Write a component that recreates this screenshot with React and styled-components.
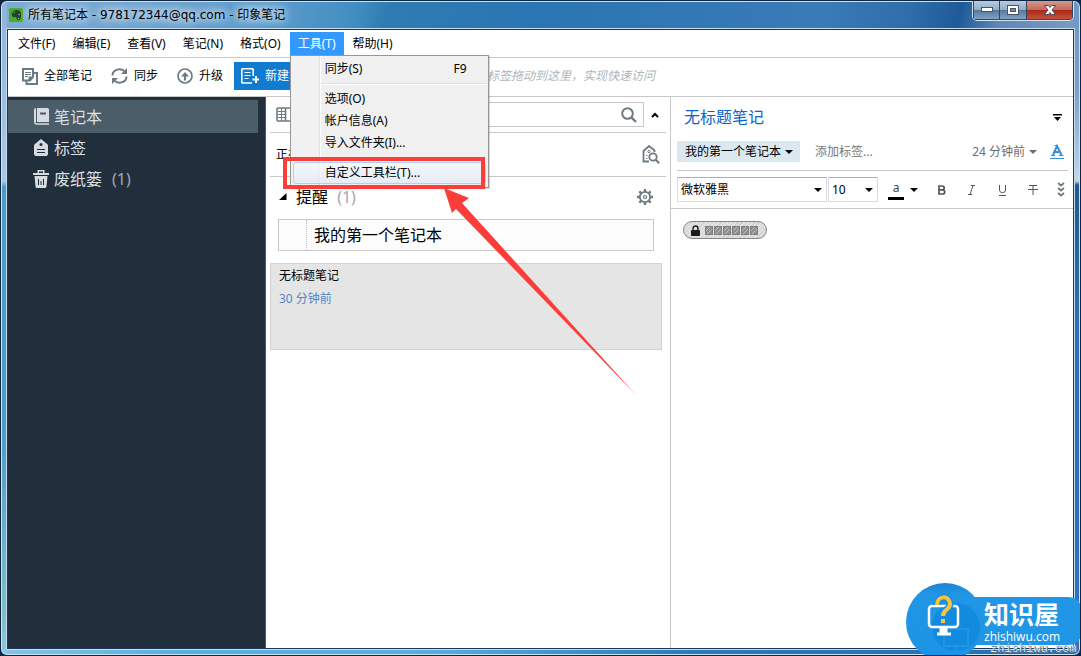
import React from 'react';
import styled, { createGlobalStyle } from 'styled-components';

const GlobalStyle = createGlobalStyle`
    * {
        box-sizing: border-box;
    }
    html, body {
        margin: 0;
        background: #0d2444;
    }
    body, button, input, select {
        font-family: "Noto Sans", "Noto Sans CJK SC", sans-serif;
        font-size: 12px;
        line-height: 18px;
        color: #000;
    }
    button {
        border: 0;
        padding: 0;
        background: none;
        white-space: nowrap;
    }
    h1, h2, h3, p {
        margin: 0;
        font-weight: 400;
    }
    svg {
        display: block;
        flex: none;
    }
`;

/* ---------- window frame ---------- */

const Window = styled.div`
    position: relative;
    display: flex;
    flex-direction: column;
    min-height: 100vh;
    padding: 0 4px 4px;
    border: 1px solid #10263f;
    border-radius: 7px;
    overflow: hidden;
    box-shadow: inset 0 0 0 1px #c9e2f4;
    background:
        linear-gradient(#8fb4d9 0, #a9c9e6 180px, #4d9ac9 186px, #4d9ac9 420px, #7fc0c8 620px, #8cc6ec) left / 6px 100% no-repeat,
        linear-gradient(#6f97c4 0, #7c9fca 90px, #c3d5ea 180px, #1f5896 184px, #2b70b6 320px, #2d74bb) right / 6px 100% no-repeat,
        linear-gradient(90deg, #85c3ea, #5aaedc 180px, #5aaedc 420px, #2a78ba 700px, #2a6db2) bottom / 100% 7px no-repeat,
        linear-gradient(105deg, #7fabd3 0, #5d9bcb 260px, #4791c4 330px, #3f8cc0 350px, #2f7cb2 375px, #2a75b3 520px, #3a7ab7 800px, #2f6dab 880px, #1f5a98 930px, #6088b6 970px, #7a99c2 1040px);
`;

const TitleBar = styled.header`
    display: flex;
    align-items: flex-start;
    gap: 5px;
    height: 27px;
    padding: 0 2px 0 4px;
`;

const AppLogo = styled.svg`
    margin-top: 7px;
`;

const WindowTitle = styled.h1`
    flex: 1;
    margin-top: 4px;
    font-family: "DejaVu Sans", "Noto Sans CJK SC", sans-serif;
    font-size: 12px;
    line-height: 20px;
    text-shadow: 0 0 6px #dcecf8, 0 0 10px #dcecf8, 0 0 12px #cfe4f4;
`;

const WindowButtons = styled.div`
    display: flex;
    height: 20px;
    border: 1px solid #d5e3f0;
    border-top: 0;
    border-radius: 0 0 5px 5px;
    overflow: hidden;
`;

const WindowButton = styled.button`
    display: flex;
    align-items: center;
    justify-content: center;
    width: ${({ $close }) => ($close ? '46px' : '27px')};
    border: 1px solid #33475f;
    border-top: 0;
    border-left-width: ${({ $first }) => ($first ? '1px' : '0')};
    background: ${({ $close }) =>
        $close
            ? 'linear-gradient(#d59a90, #c4695b 48%, #a92b18 52%, #c5523a)'
            : 'linear-gradient(#b9cbdd, #93aec9 48%, #56789d 52%, #7fa3c4)'};
`;

const Client = styled.div`
    flex: 1;
    display: flex;
    flex-direction: column;
    border: 1px solid #1c3a57;
    outline: 1px solid #c4dcef;
    margin: 1px 2px 2px;
    background: #fff;
`;

/* ---------- menu bar and drop-down ---------- */

const MenuBar = styled.nav`
    display: flex;
    align-items: center;
    gap: 1px;
    height: 28px;
    padding-left: 2px;
    border-bottom: 1px solid #c8c8c8;
`;

const MenuEntry = styled.div`
    position: relative;
`;

const MenuButton = styled.button`
    height: 23px;
    padding: 0 8px;
    color: ${({ $open }) => ($open ? '#fff' : '#000')};
    background: ${({ $open }) => ($open ? '#3399ff' : 'transparent')};
`;

const Dropdown = styled.div`
    position: absolute;
    z-index: 5;
    top: 100%;
    left: 0;
    width: 199px;
    padding: 2px 2px 3px;
    border: 1px solid #979797;
    background: linear-gradient(90deg, #f1f1f1 28px, #dfdfdf 28px, #dfdfdf 29px, #fff 29px, #fff 30px, #f0f0f0 30px);
    box-shadow: 1px 1px 1px rgba(0, 0, 0, 0.15);
`;

const DropdownItem = styled.button`
    display: flex;
    justify-content: space-between;
    align-items: center;
    width: 100%;
    height: 22px;
    padding: 0 18px 0 31px;
    border: 1px solid ${({ $active }) => ($active ? '#aecff7' : 'transparent')};
    border-radius: 3px;
    background: ${({ $active }) => ($active ? 'linear-gradient(rgba(246, 248, 252, 0.8), rgba(226, 235, 246, 0.8))' : 'none')};
`;

const Separator = styled.hr`
    height: 2px;
    margin: 3px 0 3px 28px;
    border: 0;
    border-top: 1px solid #dfdfdf;
    background: #fff;
`;

const Highlight = styled.div`
    position: absolute;
    left: -8px;
    top: 101px;
    width: 202px;
    height: 32px;
    border: 4px solid #fc3d39;
    pointer-events: none;
`;

const Arrow = styled.svg`
    position: absolute;
    left: 153px;
    top: 132px;
    pointer-events: none;
`;

/* ---------- toolbar ---------- */

const Toolbar = styled.div`
    display: flex;
    align-items: center;
    height: 39px;
    padding: 0 13px 2px 14px;
    border-bottom: 1px solid #c8c8c8;
`;

const ToolButton = styled.button`
    display: flex;
    align-items: center;
    gap: 6px;
    margin-right: 19px;
`;

const NewNoteButton = styled.button`
    display: flex;
    align-items: center;
    gap: 6px;
    width: 120px;
    height: 28px;
    margin-left: -8px;
    padding-left: 7px;
    color: #fff;
    background: #117bcf;
`;

const DropHint = styled.p`
    flex: 1;
    padding-left: 133px;
    font-style: italic;
    color: #b0b5b9;
    white-space: nowrap;
`;

/* ---------- columns ---------- */

const Columns = styled.div`
    flex: 1;
    display: grid;
    grid-template-columns: 258px minmax(0, 404fr) minmax(0, 403fr);
`;

const Sidebar = styled.nav`
    padding-top: 3px;
    border-right: 1px solid #4b5b66;
    background: #212e3b;
`;

const SidebarItem = styled.button`
    display: flex;
    align-items: center;
    gap: 5px;
    width: 250px;
    height: ${({ $active }) => ($active ? '33px' : '31px')};
    padding: ${({ $active }) => ($active ? '0 0 0 25px' : '0 0 2px 25px')};
    font-size: 16px;
    line-height: 24px;
    color: #d9dfe3;
    background: ${({ $active }) => ($active ? '#4a5d69' : 'none')};
`;

const Count = styled.span`
    margin-left: 5px;
    color: #a3a8ab;
`;

const NoteList = styled.section`
    padding: 0 4px;
`;

const SearchRow = styled.form`
    display: flex;
    align-items: center;
    gap: 7px;
    height: 36px;
    padding: 0 7px 0 6px;
    border-bottom: 1px solid #c8c8c8;
`;

const SearchBox = styled.label`
    flex: 1;
    display: flex;
    align-items: center;
    height: 25px;
    margin-left: 12px;
    padding-right: 6px;
    border: 1px solid #c8c8c8;
`;

const SearchInput = styled.input`
    flex: 1;
    min-width: 0;
    border: 0;
    outline: 0;
    background: none;
`;

const ViewingRow = styled.div`
    display: flex;
    align-items: center;
    justify-content: space-between;
    height: 44px;
    padding: 0 6px;
    border-bottom: 1px solid #c8c8c8;
`;

const ReminderHeader = styled.div`
    display: flex;
    align-items: center;
    gap: 9px;
    height: 42px;
    padding: 0 13px 3px 9px;
`;

const ReminderTitle = styled.h2`
    flex: 1;
    font-size: 16px;
    line-height: 24px;
`;

const ReminderBox = styled.button`
    display: flex;
    width: calc(100% - 20px);
    height: 32px;
    margin: 0 12px 12px 8px;
    padding-left: 27px;
    border: 1px solid #c8c8c8;
    background: #fcfcfc;
    font-size: 16px;
    line-height: 30px;

    span {
        border-left: 1px dotted #c0c0c0;
        padding-left: 7px;
    }
`;

const NoteCard = styled.article`
    height: 87px;
    margin-right: 4px;
    padding: 3px 8px;
    border: 1px solid #d2d2d2;
    background: #e5e5e5;
`;

const CardTitle = styled.h3`
    font-size: 12px;
`;

const CardTime = styled.p`
    margin-top: 5px;
    color: #5585c7;
`;

/* ---------- editor ---------- */

const Editor = styled.section`
    border-left: 1px solid #c8c8c8;
`;

const EditorTop = styled.div`
    margin: 0 5px 0 6px;
    border-bottom: 1px solid #c8c8c8;
`;

const EditorTitleRow = styled.div`
    display: flex;
    align-items: center;
    justify-content: space-between;
    height: 40px;
    padding: 0 5px 0 7px;
    margin-bottom: 4px;
`;

const EditorTitle = styled.h2`
    font-size: 16px;
    line-height: 24px;
    color: #0c66c8;
`;

const MetaRow = styled.div`
    display: flex;
    align-items: center;
    height: 21px;
    margin-bottom: 8px;
`;

const NotebookButton = styled.button`
    display: flex;
    align-items: center;
    gap: 4px;
    height: 21px;
    padding: 0 7px 0 8px;
    background: #dbe8ef;
`;

const TagInput = styled.input`
    flex: 1;
    min-width: 0;
    margin-left: 15px;
    padding: 0;
    border: 0;
    outline: 0;

    &::placeholder {
        color: #767676;
        opacity: 1;
    }
`;

const TimeButton = styled.button`
    display: flex;
    align-items: center;
    gap: 4px;
    margin-right: 13px;
    color: #6d6d6d;
`;

const FormatBar = styled.div`
    display: flex;
    align-items: center;
    padding: 6px 8px 6px 6px;
    border-bottom: 1px solid #c8c8c8;
`;

const SelectWrap = styled.div`
    position: relative;
    width: ${({ $wide }) => ($wide ? '150px' : '50px')};
    margin-right: 1px;

    svg {
        position: absolute;
        right: 5px;
        top: 11px;
        pointer-events: none;
    }
`;

const Select = styled.select`
    appearance: none;
    width: 100%;
    height: 25px;
    padding: 0 3px;
    border: 1px solid #d9dbe2;
    border-top-color: #abadb3;
    border-radius: 1px;
    background: #fff;
`;

const FormatButtons = styled.div`
    flex: 1;
    display: flex;
    align-items: center;
    justify-content: space-between;
    padding-left: 9px;
`;

const ColorButton = styled.button`
    display: flex;
    align-items: center;
    gap: 6px;

    span {
        width: 16px;
        height: 20px;
        line-height: 16px;
        font-size: 12px;
        color: #444;
        border-bottom: 3px solid #000;
    }
`;

const NoteBody = styled.div`
    padding: 12px;
`;

const Encrypted = styled.button`
    display: flex;
    align-items: center;
    gap: 5px;
    height: 18px;
    padding: 0 7px;
    border: 1px solid #858585;
    border-radius: 9px;
    background: repeating-linear-gradient(135deg, #e2e2e2 0 2px, #cfcfcf 2px 3px);
`;

/* ---------- site badge ---------- */

const SiteBadge = styled.a`
    position: absolute;
    right: -1px;
    bottom: -1px;
    width: 175px;
    height: 73px;
    color: #fff;
    text-decoration: none;

    > svg {
        position: absolute;
        left: 0;
        top: 0;
    }
`;

const BadgeText = styled.div`
    position: relative;
    display: flex;
    flex-direction: column;
    padding: 14px 0 0 78px;

    strong {
        font-size: 25px;
        line-height: 34px;
        font-weight: 700;
    }
    span {
        font-family: "Open Sans", sans-serif;
        font-size: 12px;
        line-height: 12px;
        font-weight: 500;
    }
    small {
        margin-left: 6px;
        font-family: "Liberation Mono", monospace;
        font-size: 12px;
        line-height: 12px;
        color: #d3dce3;
        text-shadow: 1px 1px 0 #6b7780;
    }
`;

/* ---------- icons ---------- */

const Caret = ({ color = '#000' }) => (
    <svg width="8" height="4" viewBox="0 0 8 4">
        <path d="M0 0h8L4 4z" fill={color} />
    </svg>
);

const LogoIcon = () => (
    <AppLogo width="14" height="14" viewBox="0 0 14 14">
        <rect width="14" height="14" rx="2" fill="#43b02a" />
        <path d="M2.500 5 5.600 2H8q1 .6 2.200.6Q12 3 12 7t-1.500 5H8.600q-1.300-.6-1-2.200L6.800 9q-3 .5-3.600-.8T2.500 5z" fill="#2c3b34" />
        <path d="M9.300 6.600h1.500M9 10.500h1.200" stroke="#8cc879" strokeWidth="1" />
        <path d="M2.800 4.900h2.700V2.400" stroke="#43b02a" strokeWidth=".7" fill="none" />
    </AppLogo>
);

const NotesIcon = () => (
    <svg width="16" height="17" viewBox="0 0 16 17" fill="none" stroke="#6c7b82">
        <path d="M4.500 13v3H15V5h-3" strokeWidth="2" />
        <path d="M1 1h10v8L8 12.500H1z" strokeWidth="2" fill="#fff" />
        <path d="M3 4.500h6M3 6.500h6M3 8.500h3" />
        <path d="M7 12.500V9h4z" fill="#6c7b82" />
    </svg>
);

const SyncIcon = () => (
    <svg width="17" height="16" viewBox="0 0 17 16" fill="none" stroke="#6c7b82" strokeWidth="2">
        <path d="M1.500 7.500C1.500 1 10.500-.5 14 4M15.500 8.500C15.500 15 6.500 16.500 3 12" />
        <path d="M16 0v6h-6zM1 16v-6h6z" fill="#6c7b82" stroke="none" />
    </svg>
);

const UpgradeIcon = () => (
    <svg width="16" height="16" viewBox="0 0 16 16" fill="none" stroke="#6c7b82" strokeWidth="1.700">
        <circle cx="8" cy="8" r="7" />
        <path d="M8 12.500V6" strokeWidth="2.200" />
        <path d="M4 8.500 8 4l4 4.500z" fill="#6c7b82" stroke="none" />
    </svg>
);

const NewNoteIcon = () => (
    <svg width="18" height="16" viewBox="0 0 18 16" fill="none" stroke="#fff" strokeWidth="1.600">
        <path d="M12.200 8V1.500q0-.7-.7-.7H1.500q-.7 0-.7.700v12.800q0 .7.700.7h9.500" />
        <path d="M3.500 4.500h6M3.500 7.500h6M3.500 10.500h4" strokeWidth="1" />
        <path d="M15 8v7M11.500 11.500h7" strokeWidth="2" />
    </svg>
);

const NotebookIcon = () => (
    <svg width="16" height="17" viewBox="0 0 16 17">
        <path d="M1 2q0-2 2-2v14H1zM4 0h10.500Q16 0 16 1.500V14H4z" fill="#d5dbe0" />
        <path d="M7 4.500h6v2H7z" fill="#4a5d69" />
        <path d="M1.700 14q0 2 2 2H16" stroke="#d5dbe0" strokeWidth="1.300" fill="none" />
    </svg>
);

const TagIcon = () => (
    <svg width="16" height="17" viewBox="0 0 16 17">
        <path d="M8 0 13.500 4.500q1.500 1 1.500 2V15q0 2-2 2H3q-2 0-2-2V6.500q0-1 1.500-2z" fill="#d5dbe0" />
        <circle cx="8" cy="5.500" r="1.500" fill="#212e3b" />
        <path d="M4 10.500h8M4 13.500h8" stroke="#212e3b" />
    </svg>
);

const TrashIcon = () => (
    <svg width="16" height="18" viewBox="0 0 16 18">
        <path d="M0 3h16v2H0zM4.500 0h7v3H10V1.500H6V3H4.500zM1.500 6h13l-1 10.500q-.2 1.500-1.500 1.500H4q-1.300 0-1.500-1.500z" fill="#d5dbe0" />
        <path d="M5.500 9v6M8 11v4M10.500 9v6" stroke="#212e3b" />
    </svg>
);

const TableIcon = () => (
    <svg width="20" height="15" viewBox="0 0 20 15" fill="none" stroke="#6c7b82">
        <rect x="1" y="1" width="18" height="13" rx="1" strokeWidth="1.600" />
        <path d="M2 4.500h7M2 7.500h7M2 10.500h7M5.500 1v13" />
        <path d="M9.500 1v13" strokeWidth="1.600" />
    </svg>
);

const SearchIcon = () => (
    <svg width="16" height="16" viewBox="0 0 16 16" fill="none" stroke="#6c7b82" strokeWidth="2">
        <circle cx="6.500" cy="6.500" r="5.300" />
        <path d="m10.300 10.300 4.700 4.700" strokeWidth="2.400" />
    </svg>
);

const HouseSearchIcon = () => (
    <svg width="18" height="19" viewBox="0 0 18 19" fill="none" stroke="#6c7b82">
        <path d="M7 16.500H1.500V6L7 1l5.500 4.500V7" strokeWidth="1.800" />
        <circle cx="7" cy="6.500" r="1.200" />
        <path d="M4 10.500h1.500M4 13.500h1.500" strokeWidth="1.200" />
        <circle cx="11" cy="12" r="3.700" strokeWidth="1.800" fill="#fff" />
        <path d="m13.700 14.700 3.500 3.500" strokeWidth="2" />
    </svg>
);

const GearIcon = () => (
    <svg width="16" height="16" viewBox="0 0 16 16" fill="none" stroke="#6c7b82">
        <circle cx="8" cy="8" r="5.200" strokeWidth="1.800" />
        <circle cx="8" cy="8" r="1.500" strokeWidth="1.200" />
        <path d="M8 0v3M8 13v3M0 8h3M13 8h3M2.300 2.300l2.200 2.200M11.500 11.500l2.200 2.200M13.700 2.300l-2.200 2.200M4.500 11.500l-2.200 2.200" strokeWidth="2.400" />
    </svg>
);

const InfoIcon = () => (
    <svg width="10" height="7" viewBox="0 0 10 7">
        <path d="M0 0h9v1.500H0zM1 3h7L4.500 7z" fill="#000" />
    </svg>
);

const LetterIcon = ({ d, strokeWidth = 1 }) => (
    <svg width="11" height="12" viewBox="0 0 11 12" fill="none" stroke="#555" strokeWidth={strokeWidth}>
        <path d={d} />
    </svg>
);

const LockIcon = () => (
    <svg width="9" height="11" viewBox="0 0 9 11">
        <path d="M2 5V3.500a2.500 2.500 0 0 1 5 0V5" fill="none" stroke="#1c1c1c" strokeWidth="1.400" />
        <rect y="5" width="9" height="6" rx="1" fill="#1c1c1c" />
    </svg>
);

const MaskIcon = () => (
    <svg width="54" height="9" viewBox="0 0 54 9">
        {[0, 1, 2, 3, 4, 5].map((n) => (
            <g key={n} transform={`translate(${n * 9} 0)`}>
                <rect x=".5" y=".5" width="7" height="8" fill="#8f8f8f" stroke="#808080" />
                <path d="m1 5 4-4M2 8l5-5" stroke="#bdbdbd" />
            </g>
        ))}
    </svg>
);

const BadgeArt = () => (
    <svg width="175" height="73" viewBox="0 0 175 73">
        <defs>
            <linearGradient id="badgeBlue" x1="0" y1="0" x2="0" y2="1">
                <stop offset="0" stopColor="#1b86d3" />
                <stop offset=".15" stopColor="#2196e6" />
                <stop offset="1" stopColor="#1c93e4" />
            </linearGradient>
        </defs>
        <path d="M39 14h123q13 0 13 13v22q0 13-13 13H39z" fill="#2196e6" />
        <circle cx="39" cy="39" r="39" fill="url(#badgeBlue)" />
        <circle cx="50" cy="44" r="24" fill="#0f88dd" opacity=".8" />
        <path d="M38 46h24v17H38zM50 63v5M44 69h12" stroke="#2393e2" strokeWidth="2" fill="none" />
        <g fill="none" stroke="#fff">
            <rect x="23" y="23" width="29" height="21" rx="3" strokeWidth="2.500" />
            <path d="M37.500 44v6" strokeWidth="8" />
            <path d="M31 51h14" strokeWidth="3" />
        </g>
        <path d="M31 22c0-10 13-10 13-1 0 6-7 5-7 12" stroke="#1c8fde" strokeWidth="7" fill="none" />
        <path d="M31 22c0-10 13-10 13-1 0 6-7 5-7 12" stroke="#f8c43d" strokeWidth="4" fill="none" />
        <path d="M35 36h4v4h-4z" fill="#f8c43d" />
    </svg>
);

/* ---------- data ---------- */

const menus = ['文件(F)', '编辑(E)', '查看(V)', '笔记(N)', '格式(O)', '工具(T)', '帮助(H)'];

const toolMenu = [
    { label: '同步(S)', shortcut: 'F9' },
    { separator: true },
    { label: '选项(O)' },
    { label: '帐户信息(A)' },
    { label: '导入文件夹(I)...' },
    { separator: true },
    { label: '自定义工具栏(T)...', active: true },
];

const sidebarItems = [
    { label: '笔记本', icon: <NotebookIcon />, active: true },
    { label: '标签', icon: <TagIcon /> },
    { label: '废纸篓', icon: <TrashIcon />, count: 1 },
];

const ToolDropdown = () => (
    <Dropdown role="menu">
        {toolMenu.map((item, index) =>
            item.separator ? (
                <Separator key={index} />
            ) : (
                <DropdownItem key={index} role="menuitem" $active={item.active}>
                    <span>{item.label}</span>
                    {item.shortcut && <span>{item.shortcut}</span>}
                </DropdownItem>
            )
        )}
        <Highlight />
        <Arrow width="194" height="208" viewBox="0 0 194 208">
            <path d="M0 0 25 10 18 15 192 207 12 21 8 25z" fill="#fc3d39" />
        </Arrow>
    </Dropdown>
);

const App = () => {
    return (
        <>
            <GlobalStyle />
            <Window>
                <TitleBar>
                    <LogoIcon />
                    <WindowTitle>所有笔记本 - 978172344@qq.com - 印象笔记</WindowTitle>
                    <WindowButtons>
                        <WindowButton aria-label="最小化" $first>
                            <svg width="12" height="6" viewBox="0 0 12 6">
                                <rect x=".5" y=".5" width="11" height="4" fill="#fff" stroke="#4a5568" />
                            </svg>
                        </WindowButton>
                        <WindowButton aria-label="最大化">
                            <svg width="12" height="10" viewBox="0 0 12 10">
                                <rect x=".5" y=".5" width="11" height="9" fill="#fff" stroke="#4a5568" />
                                <rect x="3.500" y="3.500" width="5" height="3" fill="#6d8bab" stroke="#4a5568" />
                            </svg>
                        </WindowButton>
                        <WindowButton aria-label="关闭" $close>
                            <svg width="12" height="10" viewBox="0 0 12 10">
                                <path d="M.5.500h4L6 2.500 7.500.500h4L8 5l3.500 4.500h-4L6 7.500 4.500 9.500h-4L4 5z" fill="#fff" stroke="#4a4a5c" />
                            </svg>
                        </WindowButton>
                    </WindowButtons>
                </TitleBar>

                <Client>
                    <MenuBar>
                        {menus.map((menu) => {
                            const open = menu === '工具(T)';
                            return (
                                <MenuEntry key={menu}>
                                    <MenuButton $open={open}>{menu}</MenuButton>
                                    {open && <ToolDropdown />}
                                </MenuEntry>
                            );
                        })}
                    </MenuBar>

                    <Toolbar>
                        <ToolButton>
                            <NotesIcon />
                            全部笔记
                        </ToolButton>
                        <ToolButton>
                            <SyncIcon />
                            同步
                        </ToolButton>
                        <ToolButton>
                            <UpgradeIcon />
                            升级
                        </ToolButton>
                        <NewNoteButton>
                            <NewNoteIcon />
                            新建笔记
                        </NewNoteButton>
                        <DropHint>标签拖动到这里，实现快速访问</DropHint>
                    </Toolbar>

                    <Columns>
                        <Sidebar>
                            {sidebarItems.map((item) => (
                                <SidebarItem key={item.label} $active={item.active}>
                                    {item.icon}
                                    {item.label}
                                    {item.count && <Count>({item.count})</Count>}
                                </SidebarItem>
                            ))}
                        </Sidebar>

                        <NoteList>
                            <SearchRow>
                                <TableIcon />
                                <SearchBox>
                                    <SearchInput type="text" aria-label="搜索" />
                                    <SearchIcon />
                                </SearchBox>
                                <svg width="8" height="6" viewBox="0 0 8 6">
                                    <path d="m1 5 3-3 3 3" fill="none" stroke="#000" strokeWidth="2" />
                                </svg>
                            </SearchRow>
                            <ViewingRow>
                                <span>正在</span>
                                <HouseSearchIcon />
                            </ViewingRow>
                            <ReminderHeader>
                                <svg width="8" height="7" viewBox="0 0 8 7">
                                    <path d="M7.500 0v7H0z" fill="#000" />
                                </svg>
                                <ReminderTitle>
                                    提醒 <Count>(1)</Count>
                                </ReminderTitle>
                                <GearIcon />
                            </ReminderHeader>
                            <ReminderBox>
                                <span>我的第一个笔记本</span>
                            </ReminderBox>
                            <NoteCard>
                                <CardTitle>无标题笔记</CardTitle>
                                <CardTime>30 分钟前</CardTime>
                            </NoteCard>
                        </NoteList>

                        <Editor>
                            <EditorTop>
                                <EditorTitleRow>
                                    <EditorTitle>无标题笔记</EditorTitle>
                                    <InfoIcon />
                                </EditorTitleRow>
                                <MetaRow>
                                    <NotebookButton>
                                        我的第一个笔记本
                                        <Caret />
                                    </NotebookButton>
                                    <TagInput aria-label="标签" placeholder="添加标签..." />
                                    <TimeButton>
                                        24 分钟前
                                        <Caret color="#6d6d6d" />
                                    </TimeButton>
                                    <svg width="18" height="15" viewBox="0 0 18 15" fill="none" stroke="#2f8fdd">
                                        <path d="M3 11 7 2 11.500 11M4.500 8h5.500" strokeWidth="2" />
                                        <path d="M1 11.500h4M9 11.500h4.500M4.500 1.500h3" />
                                        <path d="M0 14.500h14" />
                                    </svg>
                                </MetaRow>
                            </EditorTop>
                            <FormatBar>
                                <SelectWrap $wide>
                                    <Select aria-label="字体">
                                        <option>微软雅黑</option>
                                    </Select>
                                    <Caret />
                                </SelectWrap>
                                <SelectWrap>
                                    <Select aria-label="字号">
                                        <option>10</option>
                                    </Select>
                                    <Caret />
                                </SelectWrap>
                                <FormatButtons>
                                    <ColorButton aria-label="文字颜色">
                                        <span>a</span>
                                        <Caret />
                                    </ColorButton>
                                    <button aria-label="粗体">
                                        <LetterIcon strokeWidth={1.7} d="M2 2h3q2.200 0 2.200 1.900T5 5.800H2h3.300q2.400 0 2.400 2.100T5.300 10H2z" />
                                    </button>
                                    <button aria-label="斜体">
                                        <LetterIcon d="M4 1.500h4M1 10.500h4M6 1.500l-3 9" />
                                    </button>
                                    <button aria-label="下划线">
                                        <LetterIcon d="M2.500 1v5q0 2.700 3 2.700t3-2.700V1M2 11.500h7" />
                                    </button>
                                    <button aria-label="删除线">
                                        <LetterIcon d="M2 1.500h8M6 1.500v9.500M1 5.500h10" />
                                    </button>
                                    <button aria-label="更多">
                                        <svg width="8" height="15" viewBox="0 0 8 15" fill="none" stroke="#6c7b82" strokeWidth="1.800">
                                            <path d="m1 1 3 2.500L7 1M1 6l3 2.500L7 6M1 11l3 2.500L7 11" />
                                        </svg>
                                    </button>
                                </FormatButtons>
                            </FormatBar>
                            <NoteBody>
                                <Encrypted aria-label="加密文本">
                                    <LockIcon />
                                    <MaskIcon />
                                </Encrypted>
                            </NoteBody>
                        </Editor>
                    </Columns>
                </Client>

                <SiteBadge href="#">
                    <BadgeArt />
                    <BadgeText>
                        <strong>知识屋</strong>
                        <span>zhishiwu.com</span>
                        <small>zhishiwu.com</small>
                    </BadgeText>
                </SiteBadge>
            </Window>
        </>
    );
};

export default App;
